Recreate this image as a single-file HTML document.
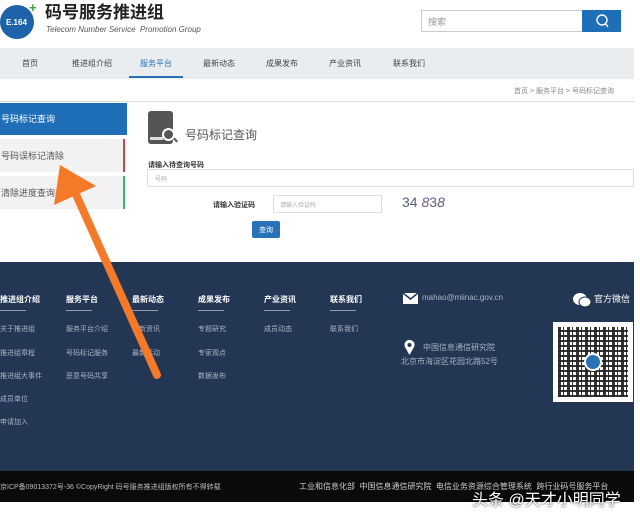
<!DOCTYPE html>
<html><head><meta charset="utf-8"><style>
*{margin:0;padding:0;box-sizing:border-box}
body{width:640px;height:521px;background:#fff;font-family:"Liberation Sans","Noto Sans CJK SC",sans-serif;position:relative;overflow:hidden;color:#555}
.a{position:absolute;white-space:nowrap}
.f{font-size:7px;color:#aab3c4}
.h{font-size:8px;color:#fff;font-weight:bold}
.ul{position:absolute;height:1px;background:#8d9ab0;width:26px}
</style></head><body>
<!-- header -->
<div class="a" style="left:0;top:5px;width:34px;height:34px;border-radius:50%;background:#1e63a8"></div>
<div class="a" style="left:6px;top:18px;font-size:8px;color:#fff;font-weight:bold">E.164</div>
<div class="a" style="left:29px;top:0;font-size:13px;color:#3a3;font-weight:bold">+</div>
<div class="a" style="left:45px;top:3px;font-size:17px;line-height:20px;color:#222;font-weight:bold">码号服务推进组</div>
<div class="a" style="left:46px;top:25px;font-size:8px;color:#555;font-style:italic">Telecom Number Service &nbsp;Promotion Group</div>
<div class="a" style="left:421px;top:10px;width:162px;height:22px;border:1px solid #ccc;background:#fff"></div>
<div class="a" style="left:428px;top:15px;font-size:9px;color:#999">搜索</div>
<div class="a" style="left:582px;top:10px;width:39px;height:22px;background:#1e6fb8"></div>
<svg class="a" style="left:594px;top:13px" width="16" height="16"><circle cx="8" cy="7" r="5" fill="none" stroke="#fff" stroke-width="1.4"/><line x1="11.5" y1="10.5" x2="14" y2="14" stroke="#fff" stroke-width="1.4"/></svg>
<!-- nav -->
<div class="a" style="left:0;top:48px;width:634px;height:31px;background:#e9edf0"></div>
<div class="a" style="left:22px;top:58px;font-size:8px;color:#444">首页</div>
<div class="a" style="left:72px;top:58px;font-size:8px;color:#444">推进组介绍</div>
<div class="a" style="left:140px;top:58px;font-size:8px;color:#2a72b8">服务平台</div>
<div class="a" style="left:129px;top:76px;width:54px;height:2px;background:#2a72b8"></div>
<div class="a" style="left:203px;top:58px;font-size:8px;color:#444">最新动态</div>
<div class="a" style="left:266px;top:58px;font-size:8px;color:#444">成果发布</div>
<div class="a" style="left:329px;top:58px;font-size:8px;color:#444">产业资讯</div>
<div class="a" style="left:393px;top:58px;font-size:8px;color:#444">联系我们</div>
<div class="a" style="left:514px;top:86px;font-size:7px;color:#888">首页 &gt; 服务平台 &gt; 号码标记查询</div>
<div class="a" style="left:0;top:101px;width:634px;height:1px;background:#ddd"></div>
<!-- sidebar -->
<div class="a" style="left:0;top:103px;width:127px;height:32px;background:#1e6fb8"></div>
<div class="a" style="left:1px;top:112px;font-size:9px;color:#fff">号码标记查询</div>
<div class="a" style="left:0;top:139px;width:125px;height:33px;background:#f2f2f2;border-right:2px solid #c9444c"></div>
<div class="a" style="left:1px;top:149px;font-size:9px;color:#555">号码误标记清除</div>
<div class="a" style="left:0;top:176px;width:125px;height:33px;background:#f2f2f2;border-right:2px solid #3db36a"></div>
<div class="a" style="left:1px;top:186px;font-size:9px;color:#555">清除进度查询</div>
<!-- form -->
<div class="a" style="left:148px;top:111px;width:25px;height:33px;background:#555;border-radius:3px"></div>
<div class="a" style="left:150px;top:137px;width:13px;height:3px;background:#ddd"></div>
<div class="a" style="left:162px;top:128px;width:13px;height:13px;border-radius:50%;background:#555;border:2px solid #fff"></div>
<div class="a" style="left:173px;top:139px;width:5px;height:2px;background:#555;transform:rotate(45deg)"></div>
<div class="a" style="left:185px;top:126px;font-size:12px;color:#555">号码标记查询</div>
<div class="a" style="left:148px;top:160px;font-size:7px;color:#333;font-weight:bold">请输入待查询号码</div>
<div class="a" style="left:147px;top:169px;width:487px;height:18px;border:1px solid #ddd"></div>
<div class="a" style="left:155px;top:174px;font-size:6px;color:#aaa">号码</div>
<div class="a" style="left:213px;top:200px;font-size:7px;color:#333;font-weight:bold">请输入验证码</div>
<div class="a" style="left:273px;top:195px;width:109px;height:18px;border:1px solid #ddd"></div>
<div class="a" style="left:280px;top:200px;font-size:6px;color:#aaa">请输入验证码</div>
<div class="a" style="left:402px;top:194px;font-size:14px;color:#5a6080">34 <i style="color:#7a5a8a">8</i>3<i>8</i></div>
<div class="a" style="left:252px;top:221px;width:28px;height:17px;background:#2a72b8;border-radius:2px"></div>
<div class="a" style="left:259px;top:225px;font-size:7px;color:#fff">查询</div>
<!-- footer -->
<div class="a" style="left:0;top:262px;width:634px;height:209px;background:#233653"></div>
<div class="a h" style="left:0;top:294px">推进组介绍</div>
<div class="a h" style="left:66px;top:294px">服务平台</div>
<div class="a h" style="left:132px;top:294px">最新动态</div>
<div class="a h" style="left:198px;top:294px">成果发布</div>
<div class="a h" style="left:264px;top:294px">产业资讯</div>
<div class="a h" style="left:330px;top:294px">联系我们</div>
<div class="ul" style="left:0;top:310px"></div><div class="ul" style="left:66px;top:310px"></div><div class="ul" style="left:132px;top:310px"></div><div class="ul" style="left:198px;top:310px"></div><div class="ul" style="left:264px;top:310px"></div><div class="ul" style="left:330px;top:310px"></div>
<div class="a f" style="left:0;top:324px">关于推进组</div>
<div class="a f" style="left:0;top:348px">推进组章程</div>
<div class="a f" style="left:0;top:371px">推进组大事件</div>
<div class="a f" style="left:0;top:394px">成员单位</div>
<div class="a f" style="left:0;top:417px">申请加入</div>
<div class="a f" style="left:66px;top:324px">服务平台介绍</div>
<div class="a f" style="left:66px;top:348px">号码标记服务</div>
<div class="a f" style="left:66px;top:371px">恶意号码共享</div>
<div class="a f" style="left:132px;top:324px">最新资讯</div>
<div class="a f" style="left:132px;top:348px">最新活动</div>
<div class="a f" style="left:198px;top:324px">专题研究</div>
<div class="a f" style="left:198px;top:348px">专家观点</div>
<div class="a f" style="left:198px;top:371px">数据发布</div>
<div class="a f" style="left:264px;top:324px">成员动态</div>
<div class="a f" style="left:330px;top:324px">联系我们</div>
<svg class="a" style="left:403px;top:293px" width="15" height="11"><rect width="15" height="11" fill="#fff"/><path d="M0 0L7.5 6L15 0" fill="none" stroke="#233653" stroke-width="1.5"/></svg>
<div class="a" style="left:422px;top:293px;font-size:8px;color:#aab3c4">mahao@miinac.gov.cn</div>
<svg class="a" style="left:404px;top:340px" width="11" height="15"><path d="M5.5 15L1 7A5 5 0 1 1 10 7Z" fill="#fff"/><circle cx="5.5" cy="5" r="2" fill="#233653"/></svg>
<div class="a" style="left:423px;top:342px;font-size:8px;color:#aab3c4">中国信息通信研究院</div>
<div class="a" style="left:401px;top:356px;font-size:8px;color:#aab3c4">北京市海淀区花园北路52号</div>
<svg class="a" style="left:573px;top:292px" width="18" height="16"><ellipse cx="7" cy="7" rx="7" ry="6" fill="#fff"/><ellipse cx="12" cy="10" rx="6" ry="5" fill="#fff" stroke="#233653"/></svg>
<div class="a" style="left:594px;top:292px;font-size:9px;color:#fff">官方微信</div>
<div class="a" style="left:553px;top:322px;width:80px;height:80px;background:#fff"></div>
<div class="a" style="left:558px;top:327px;width:70px;height:70px;background:repeating-linear-gradient(90deg,#111 0 3px,#fff 3px 5px,#111 5px 6px,#fff 6px 9px),repeating-linear-gradient(0deg,#111 0 2px,#fff 2px 5px);background-blend-mode:multiply;opacity:.85"></div>
<div class="a" style="left:584px;top:353px;width:18px;height:18px;border-radius:50%;background:#2a72b8;border:2px solid #fff"></div>
<div class="a" style="left:0;top:471px;width:634px;height:31px;background:#0a0a0a"></div>
<div class="a" style="left:0;top:482px;font-size:7px;color:#bbb">京ICP备09013372号-36 ©CopyRight 码号服务推进组版权所有不得转载</div>
<div class="a" style="left:299px;top:481px;font-size:8px;color:#ccc">工业和信息化部 &nbsp;中国信息通信研究院 &nbsp;电信业务资源综合管理系统 &nbsp;跨行业码号服务平台</div>
<div class="a" style="left:472px;top:486px;font-size:16px;color:#fff;text-shadow:0 0 2px #000">头条 @天才小明同学</div>
<!-- arrow -->
<svg class="a" style="left:0;top:0" width="640" height="521"><line x1="157" y1="375" x2="74" y2="190" stroke="#f47a2a" stroke-width="8" stroke-linecap="round"/><polygon points="60,165 54,205 96,186" fill="#f47a2a"/></svg>
</body></html>
